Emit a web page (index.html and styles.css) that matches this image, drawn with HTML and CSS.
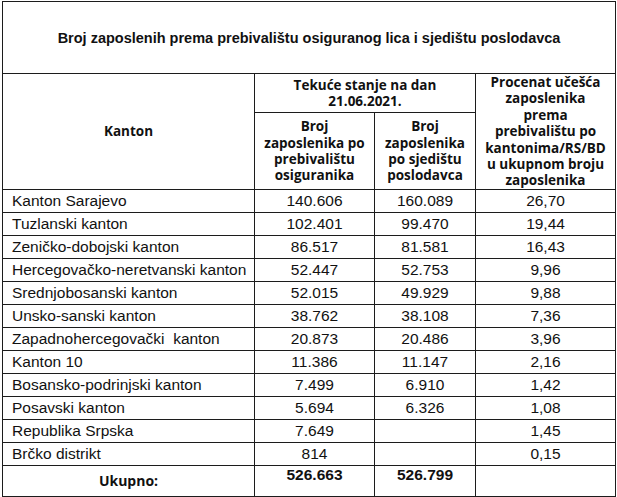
FILE: index.html
```html
<!DOCTYPE html>
<html lang="bs">
<head>
<meta charset="utf-8">
<title>Broj zaposlenih</title>
<link rel="stylesheet" href="styles.css">
</head>
<body>
<div class="page">
<table class="tbl">
  <colgroup>
    <col class="c1"><col class="c2"><col class="c3"><col class="c4">
  </colgroup>
  <thead>
    <tr class="r-title"><th colspan="4" class="title">Broj zaposlenih prema prebivalištu osiguranog lica i sjedištu poslodavca</th></tr>
    <tr class="r-h1">
      <th rowspan="2" class="hd">Kanton</th>
      <th colspan="2" class="hd">Tekuće stanje na dan<br>21.06.2021.</th>
      <th rowspan="2" class="hd">Procenat učešća<br>zaposlenika<br>prema<br>prebivalištu po<br>kantonima/RS/BD<br>u ukupnom broju<br>zaposlenika</th>
    </tr>
    <tr class="r-h2">
      <th class="hd">Broj<br>zaposlenika po<br>prebivalištu<br>osiguranika</th>
      <th class="hd">Broj<br>zaposlenika<br>po sjedištu<br>poslodavca</th>
    </tr>
  </thead>
  <tbody>
    <tr><td class="name">Kanton Sarajevo</td><td>140.606</td><td>160.089</td><td>26,70</td></tr>
    <tr><td class="name">Tuzlanski kanton</td><td>102.401</td><td>99.470</td><td>19,44</td></tr>
    <tr><td class="name">Zeničko-dobojski kanton</td><td>86.517</td><td>81.581</td><td>16,43</td></tr>
    <tr><td class="name">Hercegovačko-neretvanski kanton</td><td>52.447</td><td>52.753</td><td>9,96</td></tr>
    <tr><td class="name">Srednjobosanski kanton</td><td>52.015</td><td>49.929</td><td>9,88</td></tr>
    <tr><td class="name">Unsko-sanski kanton</td><td>38.762</td><td>38.108</td><td>7,36</td></tr>
    <tr><td class="name">Zapadnohercegovački&nbsp; kanton</td><td>20.873</td><td>20.486</td><td>3,96</td></tr>
    <tr><td class="name">Kanton 10</td><td>11.386</td><td>11.147</td><td>2,16</td></tr>
    <tr><td class="name">Bosansko-podrinjski kanton</td><td>7.499</td><td>6.910</td><td>1,42</td></tr>
    <tr><td class="name">Posavski kanton</td><td>5.694</td><td>6.326</td><td>1,08</td></tr>
    <tr><td class="name">Republika Srpska</td><td>7.649</td><td></td><td>1,45</td></tr>
    <tr><td class="name">Brčko distrikt</td><td>814</td><td></td><td>0,15</td></tr>
    <tr class="total"><td class="tlabel">Ukupno:</td><td class="tnum">526.663</td><td class="tnum">526.799</td><td></td></tr>
  </tbody>
</table>
</div>
</body>
</html>
```

FILE: styles.css
```css
html, body {
  margin: 0;
  padding: 0;
  background: #ffffff;
}
.page {
  padding: 1px 0 0 2px;
}
.tbl {
  border-collapse: collapse;
  table-layout: fixed;
  width: 613px;
  color: #111;
  font-family: "Liberation Sans", Arial, sans-serif;
}
.c1 { width: 252px; }
.c2 { width: 120px; }
.c3 { width: 101px; }
.c4 { width: 140px; }
.tbl th, .tbl td {
  border: 1px solid #1c1c1c;
  padding: 0;
}
.r-title { height: 72px; }
.title {
  font-family: "Liberation Sans", Arial, sans-serif;
  font-weight: bold;
  font-size: 14.5px;
  text-align: center;
  vertical-align: middle;
}
.r-h1 { height: 39px; }
.r-h2 { height: 76px; }
.hd {
  font-family: "Open Sans", "Noto Sans", sans-serif;
  font-weight: bold;
  font-size: 13.5px;
  line-height: 16.4px;
  text-align: center;
  vertical-align: middle;
}
.tbl tbody tr { height: 23px; }
.tbl td {
  font-size: 15.5px;
  line-height: 18px;
  text-align: center;
  vertical-align: middle;
}
.tbl td.name {
  text-align: left;
  padding-left: 9px;
  white-space: nowrap;
}
.tbl tbody tr.total { height: 31px; }
.tbl td.tlabel {
  font-family: "Open Sans", "Noto Sans", sans-serif;
  font-weight: bold;
  font-size: 14px;
}
.tbl td.tnum {
  font-weight: bold;
  vertical-align: top;
  padding-top: 0;
}
```
